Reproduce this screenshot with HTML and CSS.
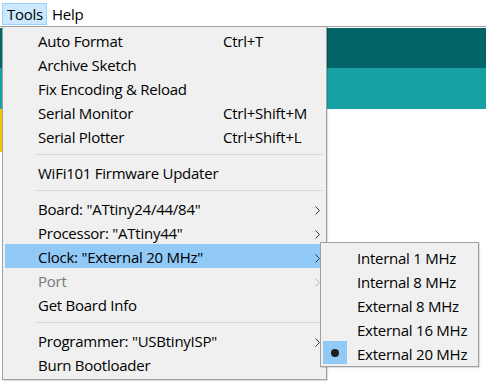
FILE: index.html
```html
<!DOCTYPE html>
<html lang="en">
<head>
  <meta charset="UTF-8" />
  <title>Tools menu</title>
  <link rel="stylesheet" href="styles.css">
</head>
<body>
  <div class="menubar">
    <span class="menubar-item active">Tools</span>
    <span class="menubar-item">Help</span>
  </div>

  <div class="editor">
    <div class="band-dark"></div>
    <div class="band-light"></div>
    <div class="strip"></div>
  </div>

  <div class="menu">
    <div class="item"><span class="label">Auto Format</span><span class="key">Ctrl+T</span></div>
    <div class="item"><span class="label">Archive Sketch</span></div>
    <div class="item"><span class="label">Fix Encoding &amp; Reload</span></div>
    <div class="item"><span class="label">Serial Monitor</span><span class="key">Ctrl+Shift+M</span></div>
    <div class="item"><span class="label">Serial Plotter</span><span class="key">Ctrl+Shift+L</span></div>
    <div class="sep"></div>
    <div class="item"><span class="label">WiFi101 Firmware Updater</span></div>
    <div class="sep"></div>
    <div class="item"><span class="label">Board: "ATtiny24/44/84"</span><span class="key"></span>
      <svg class="arrow" width="6" height="9" viewBox="0 0 6 9"><polyline points="0.5,0.5 4.5,4.5 0.5,8.5" fill="none" stroke="#333" stroke-width="1"/></svg></div>
    <div class="item"><span class="label">Processor: "ATtiny44"</span><span class="key"></span>
      <svg class="arrow" width="6" height="9" viewBox="0 0 6 9"><polyline points="0.5,0.5 4.5,4.5 0.5,8.5" fill="none" stroke="#333" stroke-width="1"/></svg></div>
    <div class="item selected"><span class="label">Clock: "External 20 MHz"</span><span class="key"></span>
      <svg class="arrow" width="6" height="9" viewBox="0 0 6 9"><polyline points="0.5,0.5 4.5,4.5 0.5,8.5" fill="none" stroke="#333" stroke-width="1"/></svg></div>
    <div class="item disabled"><span class="label">Port</span><span class="key"></span>
      <svg class="arrow" width="6" height="9" viewBox="0 0 6 9"><polyline points="0.5,0.5 4.5,4.5 0.5,8.5" fill="none" stroke="#b0b0b0" stroke-width="1"/></svg></div>
    <div class="item"><span class="label">Get Board Info</span></div>
    <div class="sep"></div>
    <div class="item"><span class="label">Programmer: "USBtinyISP"</span><span class="key"></span>
      <svg class="arrow" width="6" height="9" viewBox="0 0 6 9"><polyline points="0.5,0.5 4.5,4.5 0.5,8.5" fill="none" stroke="#333" stroke-width="1"/></svg></div>
    <div class="item"><span class="label">Burn Bootloader</span></div>
  </div>

  <div class="submenu">
    <div class="sub-item"><span class="check"></span><span>Internal 1 MHz</span></div>
    <div class="sub-item"><span class="check"></span><span>Internal 8 MHz</span></div>
    <div class="sub-item"><span class="check"></span><span>External 8 MHz</span></div>
    <div class="sub-item"><span class="check"></span><span>External 16 MHz</span></div>
    <div class="sub-item"><span class="check on"><span class="dot"></span></span><span>External 20 MHz</span></div>
  </div>
</body>
</html>
```

FILE: styles.css
```css
body {
  margin: 0;
  width: 486px;
  height: 382px;
  overflow: hidden;
  position: relative;
  background: #fff;
  font-family: "Open Sans", "Noto Sans", sans-serif;
  font-size: 15px;
  letter-spacing: -0.25px;
  color: #000;
}
.menubar {
  border-bottom: 1px solid #a0a0a0;
  box-sizing: border-box;
  height: 27px;
  display: flex;
  align-items: flex-start;
  padding: 3px 0 0 2px;
}
.menubar-item {
  height: 22px;
  line-height: 20px;
  padding: 0 3px 0 4px;
  border: 1px solid transparent;
  box-sizing: border-box;
}
.menubar-item.active {
  background: #cce8ff;
  border-color: #99d1ff;
}
.editor {
  margin-top: 1px;
}
.band-dark {
  height: 40px;
  background: #006468;
}
.band-light {
  height: 41px;
  background: #17a1a5;
}
.strip {
  width: 4px;
  height: 43px;
  background: #f5c400;
}

/* dropdown */
.menu {
  position: absolute;
  left: 2px;
  top: 26px;
  width: 319px;
  padding: 1px 2px 3px;
  background: #f0f0f0;
  border: 1px solid #a0a0a0;
  box-shadow: 1px 1px 1px rgba(0, 0, 0, 0.12);
}
.item {
  display: flex;
  align-items: center;
  height: 24px;
  padding-top: 2px;
  box-sizing: border-box;
  line-height: 22px;
  white-space: nowrap;
}
.item .label {
  width: 185px;
  padding-left: 33px;
}
.item .key {
  flex: 1;
}
.item .arrow {
  margin: 2px 3px 0 0;
}
.item.selected {
  background: #91c9f7;
}
.item.disabled {
  color: #7a7a7a;
}
.sep {
  height: 1px;
  background: #d7d7d7;
  margin: 6px 1px 5px 30px;
}

.submenu {
  position: absolute;
  left: 320px;
  top: 242px;
  width: 153px;
  padding: 2px 2px 1px;
  background: #f0f0f0;
  border: 1px solid #a0a0a0;
  box-shadow: 1px 1px 1px rgba(0, 0, 0, 0.12);
}
.sub-item {
  display: flex;
  align-items: flex-start;
  height: 24px;
  line-height: 22px;
  padding-top: 2px;
  box-sizing: border-box;
  white-space: nowrap;
}
.check {
  width: 24px;
  height: 23px;
  margin: -2px 10px 0 0;
  display: flex;
  align-items: center;
  justify-content: center;
}
.check.on {
  background: #91c9f7;
}
.dot {
  width: 8px;
  height: 8px;
  border-radius: 50%;
  background: #1e1e1e;
}
```
